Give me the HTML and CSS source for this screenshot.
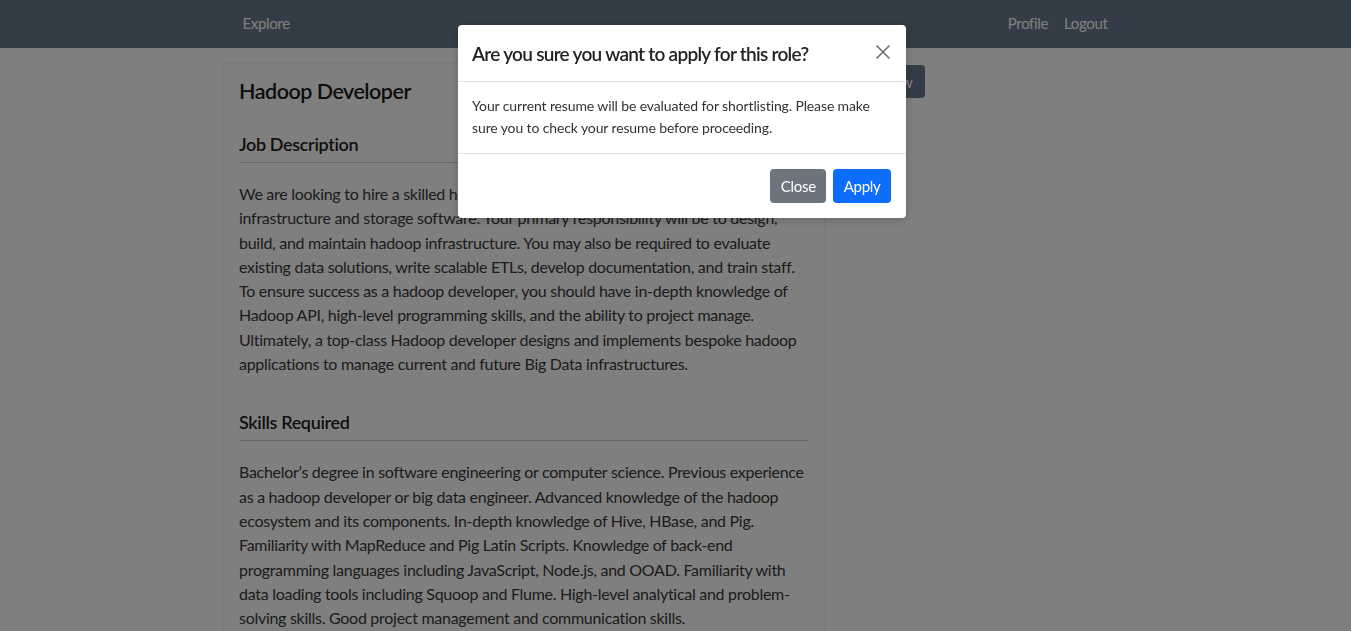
FILE: index.html
```html
<!DOCTYPE html>
<html lang="en">
<head>
<meta charset="utf-8">
<title>Hadoop Developer</title>
<link rel="stylesheet" href="styles.css">
</head>
<body>
<nav class="navbar">
  <div class="nav-inner">
    <a class="nav-link" href="#">Explore</a>
    <div class="nav-right">
      <a class="nav-link" href="#">Profile</a>
      <a class="nav-link" href="#">Logout</a>
    </div>
  </div>
</nav>
<main class="page">
  <article class="card">
    <h1 class="job-title">Hadoop Developer</h1>
    <section class="section">
      <h2 class="section-title">Job Description</h2>
      <p class="section-text">We are looking to hire a skilled hadoop developer to help build our big data infrastructure and storage software. Your primary responsibility will be to design, build, and maintain hadoop infrastructure. You may also be required to evaluate existing data solutions, write scalable ETLs, develop documentation, and train staff. To ensure success as a hadoop developer, you should have in-depth knowledge of Hadoop API, high-level programming skills, and the ability to project manage. Ultimately, a top-class Hadoop developer designs and implements bespoke hadoop applications to manage current and future Big Data infrastructures.</p>
    </section>
    <section class="section">
      <h2 class="section-title">Skills Required</h2>
      <p class="section-text">Bachelor’s degree in software engineering or computer science. Previous experience as a hadoop developer or big data engineer. Advanced knowledge of the hadoop ecosystem and its components. In-depth knowledge of Hive, HBase, and Pig. Familiarity with MapReduce and Pig Latin Scripts. Knowledge of back-end programming languages including JavaScript, Node.js, and OOAD. Familiarity with data loading tools including Squoop and Flume. High-level analytical and problem-solving skills. Good project management and communication skills.</p>
    </section>
  </article>
  <div class="side">
    <button class="btn btn-dark">Apply Now</button>
  </div>
</main>
<div class="backdrop"></div>
<div class="modal-wrap">
  <div class="modal">
    <div class="modal-header">
      <h3 class="modal-title">Are you sure you want to apply for this role?</h3>
      <button class="btn-close" aria-label="Close">
        <svg width="16" height="16" viewBox="0 0 16 16"><path d="M1.5 1.5 L14.5 14.5 M14.5 1.5 L1.5 14.5" stroke="#6f6f6f" stroke-width="1.6" fill="none"/></svg>
      </button>
    </div>
    <div class="modal-body">Your current resume will be evaluated for shortlisting. Please make sure you to check your resume before proceeding.</div>
    <div class="modal-footer">
      <button class="btn btn-secondary">Close</button>
      <button class="btn btn-primary">Apply</button>
    </div>
  </div>
</div>
</body>
</html>
```

FILE: styles.css
```css
* { box-sizing: border-box; }
html, body { margin: 0; padding: 0; }
body {
  font-family: Lato, "Open Sans", sans-serif;
  background: #ffffff;
  color: #3a3a3a;
  height: 631px;
  overflow: hidden;
}
.navbar {
  background: #667a8e;
  height: 48px;
}
.nav-inner {
  width: 880px;
  margin: 0 auto;
  height: 48px;
  display: flex;
  align-items: center;
  justify-content: space-between;
  transform: translate(-1px, -1px);
}
.nav-right { display: flex; gap: 1px; }
.nav-link {
  color: #ffffff;
  text-decoration: none;
  font-size: 15px;
  letter-spacing: -0.35px;
  padding: 0 7px 0 8px;
}
.page {
  display: flex;
  align-items: flex-start;
  gap: 5px;
  padding-left: 224px;
  padding-top: 16px;
}
.card {
  width: 600px;
  background: #fff;
  padding: 13px 15px 20px;
  box-shadow: 0 0 4px rgba(0,0,0,0.12);
  flex-shrink: 0;
}
.job-title {
  margin: 0 0 27px;
  font-size: 21.5px;
  letter-spacing: -0.5px;
  font-weight: 600;
  line-height: 28px;
  color: #1a1a1a;
}
.section { margin-bottom: 34px; }
.section-title {
  margin: 0;
  font-size: 18px;
  letter-spacing: -0.35px;
  font-weight: 600;
  line-height: 24px;
  padding-bottom: 6px;
  border-bottom: 1px solid #cfcfcf;
  color: #1f1f1f;
}
.section-text {
  margin: 19px 0 0;
  font-size: 16px;
  letter-spacing: -0.28px;
  line-height: 24.3px;
  color: #383838;
}
.side { padding-top: 1px; }
.btn {
  font-family: inherit;
  border: none;
  border-radius: 4px;
  font-size: 15px;
  letter-spacing: -0.3px;
  color: #fff;
  padding: 0 12px;
  height: 34px;
  cursor: pointer;
}
.btn-dark { background: #667a8e; height: 33px; padding: 0 13px; }
.btn-secondary { background: #6c757d; padding: 0 10.5px; }
.btn-primary { background: #0d6efd; padding: 0 10.5px; }
.backdrop {
  position: fixed;
  inset: 0;
  background: rgba(0,0,0,0.5);
}
.modal-wrap {
  position: fixed;
  inset: 0;
  display: flex;
  justify-content: center;
  padding-top: 25px;
  padding-left: 13px;
}
.modal {
  width: 448px;
  height: 193px;
  background: #fff;
  border-radius: 4px;
  box-shadow: 0 2px 8px rgba(0,0,0,0.2);
  display: flex;
  flex-direction: column;
}
.modal-header {
  height: 57px;
  border-bottom: 1px solid #dedede;
  display: flex;
  align-items: center;
  justify-content: space-between;
  padding: 0 15px 0 14px;
}
.modal-title {
  margin: 0;
  font-size: 19px;
  letter-spacing: -0.72px;
  font-weight: 600;
  color: #222;
}
.btn-close {
  background: none;
  border: none;
  padding: 0;
  width: 16px;
  height: 16px;
  margin-top: -2px;
  cursor: pointer;
}
.modal-body {
  padding: 13px 14px 14px;
  font-size: 14px;
  letter-spacing: -0.12px;
  line-height: 22px;
  color: #333;
  border-bottom: 1px solid #dedede;
}
.modal-footer {
  flex: 1;
  display: flex;
  justify-content: flex-end;
  align-items: center;
  gap: 7px;
  padding: 0 15px 0 0;
}
```
